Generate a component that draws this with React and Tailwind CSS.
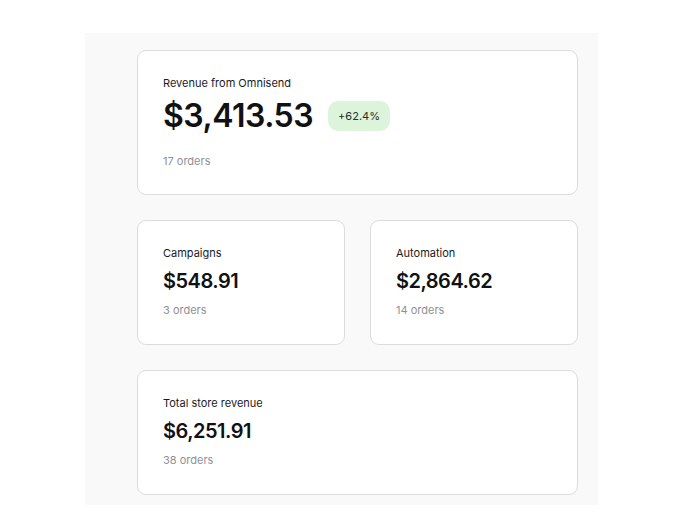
import React from 'react';

function Stat({ label, value, orders, big, badge, className = '' }) {
    return (
        <div className={`bg-white border border-[#dcdcdf] rounded-[9px] pl-[25px] pt-[25px] ${big ? 'pb-[26px]' : 'pb-[27px]'} ${className}`}>
            <div className="text-[11px] leading-[14px] text-[#1a1a1d]">{label}</div>
            {big ? (
                <div className="flex items-center gap-[15px] mt-2">
                    <div className="text-[32px] leading-[36px] font-semibold tracking-[-0.5px] text-[#111113]">{value}</div>
                    {badge && (
                        <span className="bg-[#dcf5da] rounded-[10px] px-[10px] h-[30px] flex items-center text-[11px] text-[#2a2a2a]">
                            {badge}
                        </span>
                    )}
                </div>
            ) : (
                <div className="text-[20px] leading-[26px] font-semibold tracking-[-0.5px] text-[#111113] mt-2">{value}</div>
            )}
            <div className={`text-[11px] leading-[14px] text-[#909096] ${big ? 'mt-5' : 'mt-[9px]'}`}>{orders}</div>
        </div>
    );
}

export default function App() {
    return (
        <div className="w-[700px] h-[525px] bg-white pt-[33px] pl-[85px]" style={{ fontFamily: 'Inter, "Noto Sans", sans-serif' }}>
            <div className="w-[513px] h-[472px] bg-[#f9f9fa] pl-[52px] pr-[20px] pt-[17px]">
                <div className="flex flex-col gap-[25px]">
                    <Stat big label="Revenue from Omnisend" value="$3,413.53" badge="+62.4%" orders="17 orders" />
                    <div className="grid grid-cols-2 gap-[25px]">
                        <Stat label="Campaigns" value="$548.91" orders="3 orders" />
                        <Stat label="Automation" value="$2,864.62" orders="14 orders" />
                    </div>
                    <Stat label="Total store revenue" value="$6,251.91" orders="38 orders" />
                </div>
            </div>
        </div>
    );
}
